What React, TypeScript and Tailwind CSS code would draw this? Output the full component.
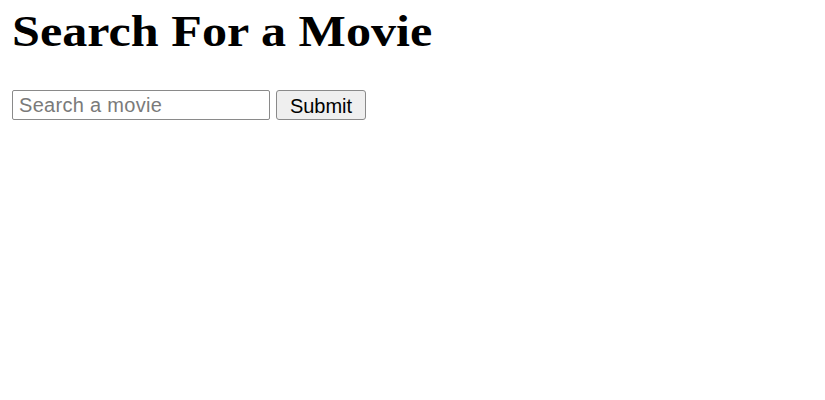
import React from "react";

export default function App() {
  return (
    <div className="min-h-[400px] w-full overflow-hidden bg-white px-[12px] pt-[10px] font-['Liberation_Sans',Arial,sans-serif]">
      <h1 className="m-0 w-max origin-left scale-x-[1.14] font-['Liberation_Serif','Times_New_Roman',serif] text-[44px] leading-[44px] font-bold whitespace-nowrap text-black">
        Search For a Movie
      </h1>
      <form className="mt-[36px] flex items-center gap-[6px]" onSubmit={(e) => e.preventDefault()}>
        <input
          type="text"
          placeholder="Search a movie"
          className="h-[30px] w-[258px] rounded-[2px] border border-[#8a8a8a] bg-white px-[6px] text-[20px] tracking-[0.3px] text-black outline-none placeholder:text-[#7a7a7a]"
        />
        <button
          type="submit"
          className="h-[30px] w-[90px] rounded-[3px] border border-[#8a8a8a] bg-[#efefef] text-[20px] text-black"
        >
          Submit
        </button>
      </form>
    </div>
  );
}
